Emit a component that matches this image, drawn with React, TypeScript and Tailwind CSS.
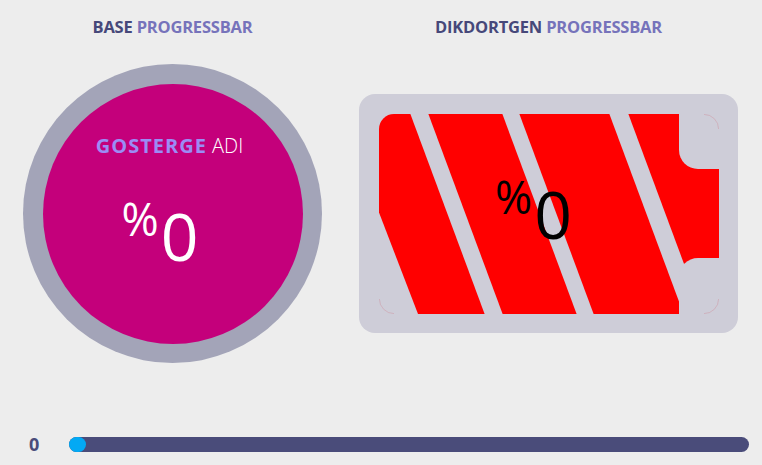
const ff = { fontFamily: '"Open Sans", "DejaVu Sans", sans-serif' };

function Heading({ dark, light }: { dark: string; light: string }) {
  return (
    <h2 className="text-center text-[16.5px] font-bold leading-5 tracking-[-0.2px]" style={ff}>
      <span className="text-[#46487a]">{dark}</span>{" "}
      <span className="text-[#7673bb]">{light}</span>
    </h2>
  );
}

function Percent({ color }: { color: string }) {
  return (
    <div className={`flex items-start font-normal leading-none ${color}`} style={ff}>
      <span className="mt-[-6px] text-[45px]">%</span>
      <span className="ml-[2px] text-[66px]">0</span>
    </div>
  );
}

function CircleGauge() {
  return (
    <div className="flex h-[299px] w-[299px] items-center justify-center rounded-full bg-[#a3a4b8]">
      <div className="flex h-[260px] w-[260px] flex-col items-center rounded-full bg-[#c4007b] pt-[50px]">
        <div className="ml-[-6px] text-[20px] leading-6 whitespace-nowrap" style={ff}>
          <span className="font-bold tracking-[1px] text-[#9b8cf5]">GOSTERGE</span>{" "}
          <span className="font-light text-white">ADI</span>
        </div>
        <div className="mt-[44px] mr-[25px]">
          <Percent color="text-white" />
        </div>
      </div>
    </div>
  );
}

function BatteryGauge() {
  const gray = "#cecdd8";
  const arc = { fill: "none", stroke: "#d07a86", strokeOpacity: 0.45, strokeWidth: 0.7 };
  return (
    <div className="relative h-[239px] w-[379px] rounded-2xl bg-[#cecdd8] p-5">
      <svg width="340" height="200" viewBox="0 0 340 200" className="block">
        <rect x="0" y="0" width="340" height="200" rx="15" fill="#ff0000" />
        <polygon points="-1,96 39,200 -1,200" fill={gray} />
        <polygon points="31,-1 49,-1 124,201 106,201" fill={gray} />
        <polygon points="123,-1 140,-1 215,201 198,201" fill={gray} />
        <polygon points="230,-1 249,-1 324,201 305,201" fill={gray} />
        <path d="M300,-1 H341 V55 H319 A19,19 0 0 1 300,36 Z" fill={gray} />
        <path d="M300,201 H341 V144 H319 A19,19 0 0 0 300,163 Z" fill={gray} />
        <path d="M325,0.4 A14.6,14.6 0 0 1 339.6,15" {...arc} />
        <path d="M339.6,185 A14.6,14.6 0 0 1 325,199.6" {...arc} />
        <path d="M15,199.6 A14.6,14.6 0 0 1 0.4,185" {...arc} />
      </svg>
      <div className="absolute left-[136px] top-[86px]">
        <Percent color="text-black" />
      </div>
    </div>
  );
}

export default function App() {
  return (
    <div className="flex h-[465px] w-[762px] flex-col overflow-hidden bg-[#ededed]">
      <div className="grid grid-cols-[299px_379px] gap-x-[37px] pl-[23px] pt-[17px]">
        <Heading dark="BASE" light="PROGRESSBAR" />
        <Heading dark="DIKDORTGEN" light="PROGRESSBAR" />
        <div className="mt-[27px] flex items-center">
          <CircleGauge />
        </div>
        <div className="mt-[27px] flex items-center">
          <BatteryGauge />
        </div>
      </div>

      <div className="mt-[73px] flex items-center pl-[29px] pr-[13px]">
        <span className="w-[40px] text-[18px] font-bold leading-4 text-[#4a4c7a]" style={ff}>
          0
        </span>
        <div className="flex h-[15px] flex-1 items-center rounded-full bg-[#4a4c7a]">
          <span className="h-[15px] w-[17px] rounded-full bg-[#03a9f4]" />
        </div>
      </div>
    </div>
  );
}
